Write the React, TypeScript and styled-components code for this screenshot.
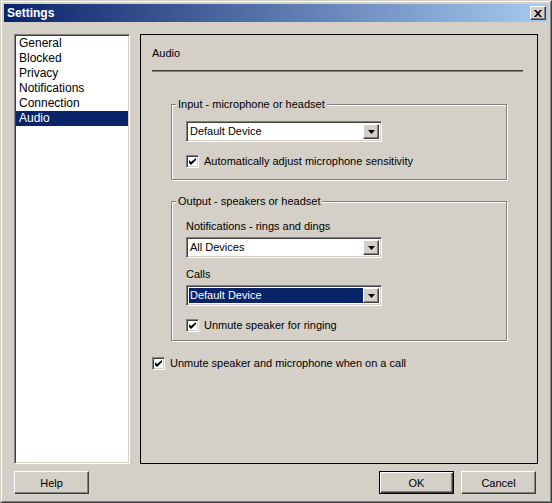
import styled, { createGlobalStyle, css } from 'styled-components';

const GlobalStyle = createGlobalStyle`
  html, body {
    margin: 0;
    padding: 0;
    background: #d4d0c8;
  }
  * {
    box-sizing: border-box;
  }
`;

const raised = css`
  border: 1px solid;
  border-color: #fff #404040 #404040 #fff;
  box-shadow: inset -1px -1px 0 #808080;
`;

const sunken = css`
  border: 1px solid;
  border-color: #808080 #fff #fff #808080;
  box-shadow: inset 1px 1px 0 #404040, inset -1px -1px 0 #d4d0c8;
`;

const Window = styled.div`
  width: 552px;
  height: 503px;
  background: #d4d0c8;
  border: 1px solid;
  border-color: #d4d0c8 #404040 #404040 #d4d0c8;
  display: flex;
  flex-direction: column;
  font-family: 'Liberation Sans', Arial, sans-serif;
  font-size: 11px;
  color: #000;
`;

const Frame = styled.div`
  flex: 1;
  display: flex;
  flex-direction: column;
  border: 1px solid;
  border-color: #fff #808080 #808080 #fff;
  padding: 2px;
`;

const TitleBar = styled.div`
  height: 18px;
  background: linear-gradient(to right, #0a246a, #a6caf0);
  display: flex;
  align-items: center;
  justify-content: space-between;
  padding: 0 2px 0 3px;
`;

const TitleText = styled.span`
  color: #fff;
  font-weight: bold;
  font-size: 12px;
`;

const CloseButton = styled.div`
  width: 16px;
  height: 14px;
  background: #d4d0c8;
  ${raised};
  display: flex;
  align-items: center;
  justify-content: center;
`;

const Body = styled.div`
  flex: 1;
  display: flex;
  flex-direction: column;
  padding: 12px 10px 5px 10px;
`;

const Main = styled.div`
  height: 430px;
  display: flex;
  gap: 10px;
`;

const List = styled.div`
  width: 116px;
  background: #fff;
  ${sunken};
  padding: 1px 1px;
  font-size: 12px;
`;

const ListItem = styled.div<{ $selected?: boolean }>`
  height: 15px;
  line-height: 15px;
  padding-left: 3px;
  background: ${p => (p.$selected ? '#0a246a' : 'transparent')};
  color: ${p => (p.$selected ? '#fff' : '#000')};
`;

const Panel = styled.div`
  flex: 1;
  border: 1px solid #000;
  padding: 12px 14px 0 11px;
`;

const PanelTitle = styled.div`
  line-height: 13px;
`;

const HeaderRule = styled.div`
  margin-top: 10px;
  height: 2px;
  background: #404040;
  border-bottom: 1px solid #808080;
`;

const Content = styled.div`
  margin-left: 19px;
  width: 336px;
`;

const Group = styled.fieldset<{ $top: number; $padTop: number; $bottom: number }>`
  margin: ${p => p.$top}px 0 0 0;
  padding: ${p => p.$padTop}px 14px ${p => p.$bottom}px 14px;
  border: 1px solid #808080;
  box-shadow: inset 1px 1px 0 #fff, 1px 1px 0 #fff;
  min-width: 0;
`;

const Legend = styled.legend`
  margin-left: -10px;
  padding: 0 2px;
  line-height: 13px;
  background: #d4d0c8;
`;

const FieldLabel = styled.div<{ $top?: number }>`
  line-height: 13px;
  margin: ${p => p.$top ?? 0}px 0 4px;
`;

const Select = styled.div`
  width: 196px;
  height: 21px;
  background: #fff;
  ${sunken};
  padding: 2px;
  display: flex;
  align-items: stretch;
`;

const SelectValue = styled.div<{ $focused?: boolean }>`
  flex: 1;
  padding-left: 1px;
  line-height: 15px;
  background: ${p => (p.$focused ? '#0a246a' : 'transparent')};
  color: ${p => (p.$focused ? '#fff' : '#000')};
  white-space: nowrap;
`;

const SelectArrow = styled.div`
  width: 16px;
  background: #d4d0c8;
  ${raised};
  display: flex;
  align-items: center;
  justify-content: center;
`;

const CheckRow = styled.label<{ $top: number }>`
  display: flex;
  align-items: center;
  gap: 5px;
  margin-top: ${p => p.$top}px;
  line-height: 13px;
`;

const CheckBox = styled.span`
  width: 13px;
  height: 13px;
  background: #fff;
  ${sunken};
  display: flex;
  align-items: center;
  justify-content: center;
  flex-shrink: 0;
`;

const Footer = styled.div`
  margin-top: 7px;
  display: flex;
  gap: 7px;
  padding-right: 2px;
`;

const Button = styled.button<{ $default?: boolean; $push?: boolean }>`
  width: 75px;
  height: 23px;
  background: #d4d0c8;
  font-family: inherit;
  font-size: 11px;
  color: #000;
  padding: 0;
  margin-left: ${p => (p.$push ? 'auto' : '0')};
  ${p =>
    p.$default
      ? css`
          border: 1px solid #000;
          box-shadow: inset 1px 1px 0 #fff, inset -1px -1px 0 #404040, inset -2px -2px 0 #808080;
        `
      : raised};
`;

const Arrow = () => (
  <svg width="7" height="4" viewBox="0 0 7 4">
    <path d="M0 0h7L3.5 4z" fill="#000" />
  </svg>
);

const Check = () => (
  <svg width="7" height="7" viewBox="0 0 7 7">
    <path d="M0 2v3l2 2 5-5V0L2 4z" fill="#000" />
  </svg>
);

const CloseX = () => (
  <svg width="8" height="7" viewBox="0 0 8 7">
    <path d="M0 0h2l2 2.3L6 0h2L5 3.5 8 7H6L4 4.7 2 7H0l3-3.5z" fill="#000" />
  </svg>
);

const Dropdown = ({ value, focused }: { value: string; focused?: boolean }) => (
  <Select>
    <SelectValue $focused={focused}>{value}</SelectValue>
    <SelectArrow>
      <Arrow />
    </SelectArrow>
  </Select>
);

const Checked = ({ top, children }: { top: number; children: string }) => (
  <CheckRow $top={top}>
    <CheckBox>
      <Check />
    </CheckBox>
    <span>{children}</span>
  </CheckRow>
);

const pages = ['General', 'Blocked', 'Privacy', 'Notifications', 'Connection', 'Audio'];

export default function App() {
  return (
    <Window>
      <GlobalStyle />
      <Frame>
        <TitleBar>
          <TitleText>Settings</TitleText>
          <CloseButton>
            <CloseX />
          </CloseButton>
        </TitleBar>
        <Body>
          <Main>
            <List>
              {pages.map(p => (
                <ListItem key={p} $selected={p === 'Audio'}>
                  {p}
                </ListItem>
              ))}
            </List>
            <Panel>
              <PanelTitle>Audio</PanelTitle>
              <HeaderRule />
              <Content>
                <Group $top={26} $padTop={10} $bottom={11}>
                  <Legend>Input - microphone or headset</Legend>
                  <Dropdown value="Default Device" />
                  <Checked top={13}>Automatically adjust microphone sensitivity</Checked>
                </Group>
                <Group $top={15} $padTop={12} $bottom={8}>
                  <Legend>Output - speakers or headset</Legend>
                  <FieldLabel>Notifications - rings and dings</FieldLabel>
                  <Dropdown value="All Devices" />
                  <FieldLabel $top={10}>Calls</FieldLabel>
                  <Dropdown value="Default Device" focused />
                  <Checked top={13}>Unmute speaker for ringing</Checked>
                </Group>
              </Content>
              <Checked top={16}>Unmute speaker and microphone when on a call</Checked>
            </Panel>
          </Main>
          <Footer>
            <Button>Help</Button>
            <Button $default $push>
              OK
            </Button>
            <Button>Cancel</Button>
          </Footer>
        </Body>
      </Frame>
    </Window>
  );
}
